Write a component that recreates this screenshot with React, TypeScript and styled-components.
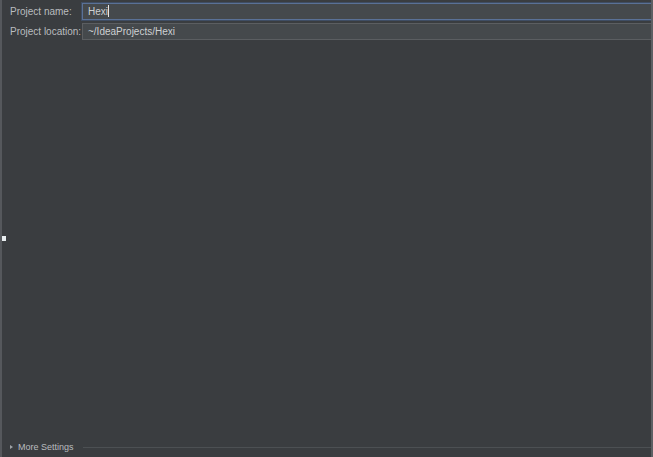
import React from "react";
import styled, { createGlobalStyle } from "styled-components";

const Global = createGlobalStyle`
  html, body { margin: 0; padding: 0; background: #3b3e41; }
  body { font-family: "Liberation Sans", Arial, sans-serif; }
  #root { height: 457px; }
`;

const Frame = styled.div`
  position: relative;
  box-sizing: border-box;
  width: 653px;
  height: 457px;
  background: #3a3d40;
  border-left: 2px solid #55585c;
  border-right: 2px solid #5c5f63;
  display: flex;
  flex-direction: column;
  overflow: hidden;
`;

const Form = styled.div`
  display: grid;
  grid-template-columns: 70px 1fr;
  column-gap: 2px;
  row-gap: 3px;
  padding: 3px 0 0 8px;
`;

const Label = styled.div`
  font-size: 10px;
  color: #b9bcbf;
  line-height: 17px;
  white-space: nowrap;
`;

const Field = styled.div<{ $focused?: boolean }>`
  box-sizing: border-box;
  height: 17px;
  margin-right: -2px;
  background: #45494c;
  border: 1px solid ${(p) => (p.$focused ? "#5a7196" : "#5b5e61")};
  box-shadow: ${(p) => (p.$focused ? "0 0 0 1px #3f4d63" : "none")};
  font-size: 10px;
  color: #cdd0d2;
  line-height: 15px;
  padding-left: 5px;
  white-space: nowrap;
`;

const Caret = styled.span`
  display: inline-block;
  width: 1px;
  height: 12px;
  background: #e6e6e6;
  vertical-align: -2px;
`;

const Spacer = styled.div`
  flex: 1;
`;

const Footer = styled.div`
  display: flex;
  align-items: center;
  height: 20px;
  padding-left: 8px;
  gap: 5px;
`;

const Arrow = styled.span`
  width: 0;
  height: 0;
  border-top: 2.5px solid transparent;
  border-bottom: 2.5px solid transparent;
  border-left: 3px solid #9fa3a6;
`;

const FooterText = styled.span`
  font-size: 9px;
  color: #b9bcbf;
  white-space: nowrap;
`;

const Rule = styled.div`
  flex: 1;
  height: 1px;
  background: #4c5053;
  margin-left: 4px;
`;

const Marker = styled.div`
  position: absolute;
  left: -2px;
  top: 236px;
  width: 6px;
  height: 5px;
  background: #e8eef0;
`;

export default function App() {
  return (
    <>
      <Global />
      <Frame>
        <Form>
          <Label>Project name:</Label>
          <Field $focused>
            Hexi<Caret />
          </Field>
          <Label>Project location:</Label>
          <Field>~/IdeaProjects/Hexi</Field>
        </Form>
        <Spacer />
        <Footer>
          <Arrow />
          <FooterText>More Settings</FooterText>
          <Rule />
        </Footer>
        <Marker />
      </Frame>
    </>
  );
}
